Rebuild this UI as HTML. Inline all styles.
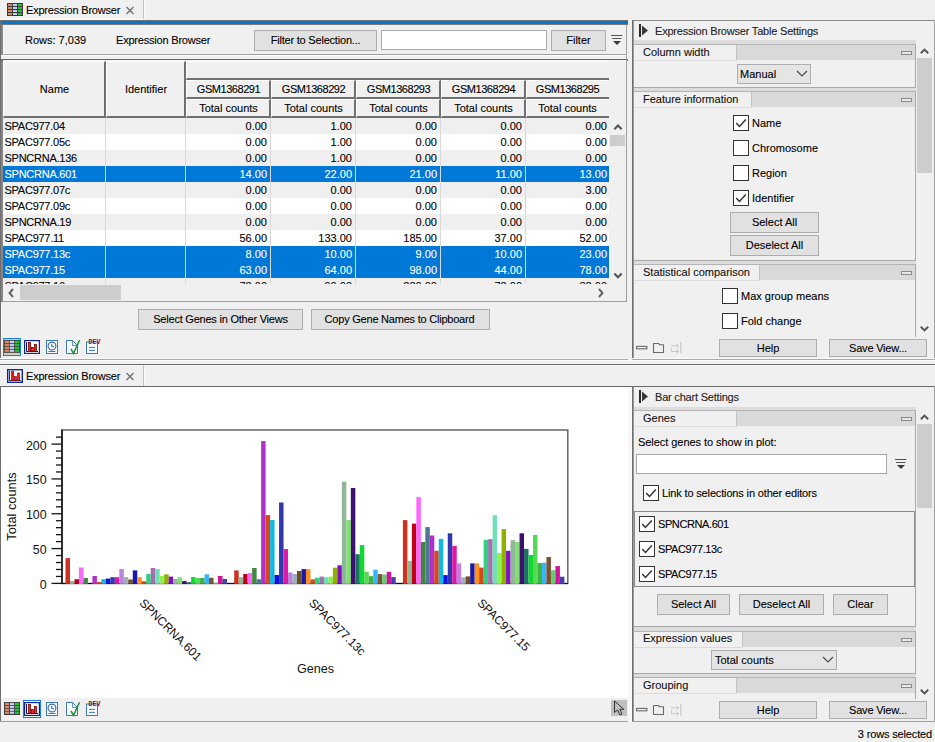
<!DOCTYPE html><html><head><meta charset="utf-8"><style>
*{margin:0;padding:0;box-sizing:border-box}
html,body{width:935px;height:742px;overflow:hidden;background:#f0f0f0;font-family:"Liberation Sans",sans-serif;font-size:11px;color:#000}
div{position:absolute}
.t{white-space:nowrap;font-size:11px;line-height:11px;-webkit-text-stroke:0.1px currentColor}
.btn{background:#e1e1e1;border:1px solid #adadad}
.chk{width:16px;height:16px;border:1px solid #333;background:#fff}
</style></head><body><div style="left:143px;top:0px;width:1px;height:19px;background:#c4c4c4"></div>
<div style="left:144px;top:0px;width:1px;height:19px;background:#fafafa"></div>
<div style="left:0px;top:19px;width:143px;height:1px;background:#fafafa"></div>
<svg width="17" height="14" style="position:absolute;left:7px;top:3px"><rect x="0" y="0" width="16" height="13" fill="#3a3a3a"/><rect x="1" y="1" width="4" height="2" fill="#dc8a64"/><rect x="6" y="1" width="4" height="2" fill="#c0d0f8"/><rect x="11" y="1" width="4" height="2" fill="#30c038"/><rect x="1" y="4" width="4" height="2" fill="#dc8a64"/><rect x="6" y="4" width="4" height="2" fill="#c0d0f8"/><rect x="11" y="4" width="4" height="2" fill="#30c038"/><rect x="1" y="7" width="4" height="2" fill="#dc8a64"/><rect x="6" y="7" width="4" height="2" fill="#c0d0f8"/><rect x="11" y="7" width="4" height="2" fill="#30c038"/><rect x="1" y="10" width="4" height="2" fill="#dc8a64"/><rect x="6" y="10" width="4" height="2" fill="#c0d0f8"/><rect x="11" y="10" width="4" height="2" fill="#30c038"/></svg>
<div class="t" style="left:26px;top:5px;font-size:11px;line-height:11px;color:#000;letter-spacing:-0.2px">Expression Browser</div>
<svg width="12" height="12" style="position:absolute;left:124px;top:4px"><path d="M2.5 3 L9.5 10 M9.5 3 L2.5 10" stroke="#707070" stroke-width="1.4"/></svg>
<div style="left:0px;top:20px;width:628px;height:1px;background:#707070"></div>
<div style="left:1px;top:21px;width:627px;height:3px;background:#0078d7"></div>
<div style="left:0px;top:24px;width:628px;height:1px;background:#7a7a7a"></div>
<div style="left:0px;top:20px;width:1px;height:339px;background:#6e6e6e"></div>
<div style="left:1px;top:25px;width:2px;height:277px;background:#868686"></div>
<div style="left:3px;top:25px;width:624px;height:30px;background:#f0f0f0;border-right:1px solid #a0a0a0;border-bottom:1px solid #a0a0a0;border-left:1px solid #fafafa"></div>
<div class="t" style="left:25px;top:35px;font-size:11px;line-height:11px;color:#000;">Rows: 7,039</div>
<div class="t" style="left:116px;top:35px;font-size:11px;line-height:11px;color:#000;letter-spacing:-0.2px">Expression Browser</div>
<div class="btn" style="left:254px;top:30px;width:123px;height:21px"></div>
<div class="t" style="left:254px;width:123px;text-align:center;top:35px;letter-spacing:-0.2px">Filter to Selection...</div>
<div style="left:381px;top:30px;width:166px;height:20px;background:#fff;border:1px solid #a8a8a8"></div>
<div class="btn" style="left:551px;top:30px;width:55px;height:21px"></div>
<div class="t" style="left:551px;width:55px;text-align:center;top:35px;">Filter</div>
<svg width="13" height="12" style="position:absolute;left:611px;top:34px"><path d="M0 1.5 H11.5 M1 4.5 H10.5" stroke="#555" stroke-width="1.2"/><path d="M2 7 H10 L6 11 Z" fill="#3a3a3a"/></svg>
<div style="left:1px;top:55px;width:627px;height:1px;background:#fcfcfc"></div>
<div style="left:1px;top:56px;width:627px;height:3px;background:#f0f0f0"></div>
<div style="left:1px;top:59px;width:627px;height:2px;background:#686868"></div>
<div style="left:3px;top:60px;width:624px;height:242px;background:#f0f0f0"></div>
<div style="left:3px;top:61px;width:103px;height:57px;background:#f0f0f0;border-top:1px solid #fff;border-left:1px solid #fff;border-right:2px solid #707070;border-bottom:2px solid #707070"></div>
<div class="t" style="left:3px;width:103px;text-align:center;top:84px;letter-spacing:0px">Name</div>
<div style="left:106px;top:61px;width:80px;height:57px;background:#f0f0f0;border-top:1px solid #fff;border-left:1px solid #fff;border-right:2px solid #707070;border-bottom:2px solid #707070"></div>
<div class="t" style="left:106px;width:80px;text-align:center;top:84px;letter-spacing:0px">Identifier</div>
<div style="left:186px;top:61px;width:423px;height:19px;background:#f0f0f0;border-top:1px solid #fff;border-left:1px solid #fff;border-bottom:2px solid #707070"></div>
<div style="left:186px;top:80px;width:85px;height:19px;background:#f0f0f0;border-top:1px solid #fff;border-left:1px solid #fff;border-right:2px solid #707070;border-bottom:2px solid #707070"></div>
<div class="t" style="left:186px;width:85px;text-align:center;top:84px;letter-spacing:-0.45px">GSM1368291</div>
<div style="left:186px;top:99px;width:85px;height:19px;background:#f0f0f0;border-top:1px solid #fff;border-left:1px solid #fff;border-right:2px solid #707070;border-bottom:2px solid #707070"></div>
<div class="t" style="left:186px;width:85px;text-align:center;top:103px;letter-spacing:0px">Total counts</div>
<div style="left:271px;top:80px;width:85px;height:19px;background:#f0f0f0;border-top:1px solid #fff;border-left:1px solid #fff;border-right:2px solid #707070;border-bottom:2px solid #707070"></div>
<div class="t" style="left:271px;width:85px;text-align:center;top:84px;letter-spacing:-0.45px">GSM1368292</div>
<div style="left:271px;top:99px;width:85px;height:19px;background:#f0f0f0;border-top:1px solid #fff;border-left:1px solid #fff;border-right:2px solid #707070;border-bottom:2px solid #707070"></div>
<div class="t" style="left:271px;width:85px;text-align:center;top:103px;letter-spacing:0px">Total counts</div>
<div style="left:356px;top:80px;width:85px;height:19px;background:#f0f0f0;border-top:1px solid #fff;border-left:1px solid #fff;border-right:2px solid #707070;border-bottom:2px solid #707070"></div>
<div class="t" style="left:356px;width:85px;text-align:center;top:84px;letter-spacing:-0.45px">GSM1368293</div>
<div style="left:356px;top:99px;width:85px;height:19px;background:#f0f0f0;border-top:1px solid #fff;border-left:1px solid #fff;border-right:2px solid #707070;border-bottom:2px solid #707070"></div>
<div class="t" style="left:356px;width:85px;text-align:center;top:103px;letter-spacing:0px">Total counts</div>
<div style="left:441px;top:80px;width:85px;height:19px;background:#f0f0f0;border-top:1px solid #fff;border-left:1px solid #fff;border-right:2px solid #707070;border-bottom:2px solid #707070"></div>
<div class="t" style="left:441px;width:85px;text-align:center;top:84px;letter-spacing:-0.45px">GSM1368294</div>
<div style="left:441px;top:99px;width:85px;height:19px;background:#f0f0f0;border-top:1px solid #fff;border-left:1px solid #fff;border-right:2px solid #707070;border-bottom:2px solid #707070"></div>
<div class="t" style="left:441px;width:85px;text-align:center;top:103px;letter-spacing:0px">Total counts</div>
<div style="left:526px;top:80px;width:83px;height:19px;background:#f0f0f0;border-top:1px solid #fff;border-left:1px solid #fff;border-bottom:2px solid #707070"></div>
<div class="t" style="left:526px;width:83px;text-align:center;top:84px;letter-spacing:-0.45px">GSM1368295</div>
<div style="left:526px;top:99px;width:83px;height:19px;background:#f0f0f0;border-top:1px solid #fff;border-left:1px solid #fff;border-bottom:2px solid #707070"></div>
<div class="t" style="left:526px;width:83px;text-align:center;top:103px;letter-spacing:0px">Total counts</div>
<div style="left:3px;top:118px;width:606px;height:166px;overflow:hidden">
<div style="left:0;top:0px;width:607px;height:16px;background:#efefef"></div>
<div class="t" style="left:1.5px;top:3px;color:#000;letter-spacing:-0.25px">SPAC977.04</div>
<div class="t" style="left:182px;width:82px;text-align:right;top:3px;color:#000">0.00</div>
<div class="t" style="left:267px;width:82px;text-align:right;top:3px;color:#000">1.00</div>
<div class="t" style="left:352px;width:82px;text-align:right;top:3px;color:#000">0.00</div>
<div class="t" style="left:437px;width:82px;text-align:right;top:3px;color:#000">0.00</div>
<div class="t" style="left:522px;width:82px;text-align:right;top:3px;color:#000">0.00</div>
<div style="left:0;top:16px;width:607px;height:16px;background:#ffffff"></div>
<div class="t" style="left:1.5px;top:19px;color:#000;letter-spacing:-0.25px">SPAC977.05c</div>
<div class="t" style="left:182px;width:82px;text-align:right;top:19px;color:#000">0.00</div>
<div class="t" style="left:267px;width:82px;text-align:right;top:19px;color:#000">1.00</div>
<div class="t" style="left:352px;width:82px;text-align:right;top:19px;color:#000">0.00</div>
<div class="t" style="left:437px;width:82px;text-align:right;top:19px;color:#000">0.00</div>
<div class="t" style="left:522px;width:82px;text-align:right;top:19px;color:#000">0.00</div>
<div style="left:0;top:32px;width:607px;height:16px;background:#efefef"></div>
<div class="t" style="left:1.5px;top:35px;color:#000;letter-spacing:-0.25px">SPNCRNA.136</div>
<div class="t" style="left:182px;width:82px;text-align:right;top:35px;color:#000">0.00</div>
<div class="t" style="left:267px;width:82px;text-align:right;top:35px;color:#000">1.00</div>
<div class="t" style="left:352px;width:82px;text-align:right;top:35px;color:#000">0.00</div>
<div class="t" style="left:437px;width:82px;text-align:right;top:35px;color:#000">0.00</div>
<div class="t" style="left:522px;width:82px;text-align:right;top:35px;color:#000">0.00</div>
<div style="left:0;top:48px;width:607px;height:16px;background:#0078d7"></div>
<div class="t" style="left:1.5px;top:51px;color:#fff;letter-spacing:-0.25px">SPNCRNA.601</div>
<div class="t" style="left:182px;width:82px;text-align:right;top:51px;color:#fff">14.00</div>
<div class="t" style="left:267px;width:82px;text-align:right;top:51px;color:#fff">22.00</div>
<div class="t" style="left:352px;width:82px;text-align:right;top:51px;color:#fff">21.00</div>
<div class="t" style="left:437px;width:82px;text-align:right;top:51px;color:#fff">11.00</div>
<div class="t" style="left:522px;width:82px;text-align:right;top:51px;color:#fff">13.00</div>
<div style="left:0;top:64px;width:607px;height:16px;background:#efefef"></div>
<div class="t" style="left:1.5px;top:67px;color:#000;letter-spacing:-0.25px">SPAC977.07c</div>
<div class="t" style="left:182px;width:82px;text-align:right;top:67px;color:#000">0.00</div>
<div class="t" style="left:267px;width:82px;text-align:right;top:67px;color:#000">0.00</div>
<div class="t" style="left:352px;width:82px;text-align:right;top:67px;color:#000">0.00</div>
<div class="t" style="left:437px;width:82px;text-align:right;top:67px;color:#000">0.00</div>
<div class="t" style="left:522px;width:82px;text-align:right;top:67px;color:#000">3.00</div>
<div style="left:0;top:80px;width:607px;height:16px;background:#ffffff"></div>
<div class="t" style="left:1.5px;top:83px;color:#000;letter-spacing:-0.25px">SPAC977.09c</div>
<div class="t" style="left:182px;width:82px;text-align:right;top:83px;color:#000">0.00</div>
<div class="t" style="left:267px;width:82px;text-align:right;top:83px;color:#000">0.00</div>
<div class="t" style="left:352px;width:82px;text-align:right;top:83px;color:#000">0.00</div>
<div class="t" style="left:437px;width:82px;text-align:right;top:83px;color:#000">0.00</div>
<div class="t" style="left:522px;width:82px;text-align:right;top:83px;color:#000">0.00</div>
<div style="left:0;top:96px;width:607px;height:16px;background:#efefef"></div>
<div class="t" style="left:1.5px;top:99px;color:#000;letter-spacing:-0.25px">SPNCRNA.19</div>
<div class="t" style="left:182px;width:82px;text-align:right;top:99px;color:#000">0.00</div>
<div class="t" style="left:267px;width:82px;text-align:right;top:99px;color:#000">0.00</div>
<div class="t" style="left:352px;width:82px;text-align:right;top:99px;color:#000">0.00</div>
<div class="t" style="left:437px;width:82px;text-align:right;top:99px;color:#000">0.00</div>
<div class="t" style="left:522px;width:82px;text-align:right;top:99px;color:#000">0.00</div>
<div style="left:0;top:112px;width:607px;height:16px;background:#ffffff"></div>
<div class="t" style="left:1.5px;top:115px;color:#000;letter-spacing:-0.25px">SPAC977.11</div>
<div class="t" style="left:182px;width:82px;text-align:right;top:115px;color:#000">56.00</div>
<div class="t" style="left:267px;width:82px;text-align:right;top:115px;color:#000">133.00</div>
<div class="t" style="left:352px;width:82px;text-align:right;top:115px;color:#000">185.00</div>
<div class="t" style="left:437px;width:82px;text-align:right;top:115px;color:#000">37.00</div>
<div class="t" style="left:522px;width:82px;text-align:right;top:115px;color:#000">52.00</div>
<div style="left:0;top:128px;width:607px;height:16px;background:#0078d7"></div>
<div class="t" style="left:1.5px;top:131px;color:#fff;letter-spacing:-0.25px">SPAC977.13c</div>
<div class="t" style="left:182px;width:82px;text-align:right;top:131px;color:#fff">8.00</div>
<div class="t" style="left:267px;width:82px;text-align:right;top:131px;color:#fff">10.00</div>
<div class="t" style="left:352px;width:82px;text-align:right;top:131px;color:#fff">9.00</div>
<div class="t" style="left:437px;width:82px;text-align:right;top:131px;color:#fff">10.00</div>
<div class="t" style="left:522px;width:82px;text-align:right;top:131px;color:#fff">23.00</div>
<div style="left:0;top:144px;width:607px;height:16px;background:#0078d7"></div>
<div class="t" style="left:1.5px;top:147px;color:#fff;letter-spacing:-0.25px">SPAC977.15</div>
<div class="t" style="left:182px;width:82px;text-align:right;top:147px;color:#fff">63.00</div>
<div class="t" style="left:267px;width:82px;text-align:right;top:147px;color:#fff">64.00</div>
<div class="t" style="left:352px;width:82px;text-align:right;top:147px;color:#fff">98.00</div>
<div class="t" style="left:437px;width:82px;text-align:right;top:147px;color:#fff">44.00</div>
<div class="t" style="left:522px;width:82px;text-align:right;top:147px;color:#fff">78.00</div>
<div style="left:0;top:160px;width:607px;height:16px;background:#efefef"></div>
<div class="t" style="left:1.5px;top:163px;color:#000;letter-spacing:-0.25px">SPAC977.16</div>
<div class="t" style="left:182px;width:82px;text-align:right;top:163px;color:#000">73.00</div>
<div class="t" style="left:267px;width:82px;text-align:right;top:163px;color:#000">90.00</div>
<div class="t" style="left:352px;width:82px;text-align:right;top:163px;color:#000">230.00</div>
<div class="t" style="left:437px;width:82px;text-align:right;top:163px;color:#000">73.00</div>
<div class="t" style="left:522px;width:82px;text-align:right;top:163px;color:#000">83.00</div>
<div style="left:102px;top:0;width:1px;height:166px;background:#d9d9d9"></div>
<div style="left:182px;top:0;width:1px;height:166px;background:#d9d9d9"></div>
<div style="left:267px;top:0;width:1px;height:166px;background:#d9d9d9"></div>
<div style="left:352px;top:0;width:1px;height:166px;background:#d9d9d9"></div>
<div style="left:437px;top:0;width:1px;height:166px;background:#d9d9d9"></div>
<div style="left:522px;top:0;width:1px;height:166px;background:#d9d9d9"></div>
</div>
<div style="left:610px;top:118px;width:16px;height:166px;background:#f0f0f0"></div>
<svg width="12" height="8" style="position:absolute;left:611.5px;top:123px"><path d="M2.3 6.2 L6 2.5 L9.7 6.2" fill="none" stroke="#555" stroke-width="2.1"/></svg>
<div style="left:610px;top:135px;width:15px;height:11px;background:#cdcdcd"></div>
<svg width="12" height="8" style="position:absolute;left:611.5px;top:272px"><path d="M2.3 1.5 L6 5.2 L9.7 1.5" fill="none" stroke="#555" stroke-width="2.1"/></svg>
<div style="left:3px;top:284px;width:624px;height:17px;background:#f0f0f0"></div>
<svg width="6" height="10" style="position:absolute;left:8px;top:288px"><path d="M5 1 L1.5 5 L5 9" fill="none" stroke="#606060" stroke-width="1.9"/></svg>
<div style="left:20px;top:285px;width:101px;height:15px;background:#cdcdcd"></div>
<svg width="6" height="10" style="position:absolute;left:598px;top:288px"><path d="M1 1 L4.5 5 L1 9" fill="none" stroke="#606060" stroke-width="1.9"/></svg>
<div style="left:3px;top:301px;width:624px;height:1px;background:#a0a0a0"></div>
<div style="left:626px;top:25px;width:1px;height:277px;background:#a0a0a0"></div>
<div class="btn" style="left:138px;top:309px;width:165px;height:21px"></div>
<div class="t" style="left:138px;width:165px;text-align:center;top:314px;letter-spacing:-0.22px">Select Genes in Other Views</div>
<div class="btn" style="left:311px;top:309px;width:179px;height:21px"></div>
<div class="t" style="left:311px;width:179px;text-align:center;top:314px;letter-spacing:-0.22px;text-indent:-2px">Copy Gene Names to Clipboard</div>
<svg width="110" height="20" style="position:absolute;left:0px;top:338px"><rect x="3.5" y="0.5" width="17" height="17" fill="none" stroke="#1a80e0" stroke-width="1.1"/><rect x="4" y="1" width="16" height="16" fill="#d4cac0"/><rect x="4" y="2" width="16" height="12.8" fill="#3a3a3a"/><rect x="4.70" y="2.80" width="4.4" height="2.2" fill="#dc8a64"/><rect x="9.75" y="2.80" width="4.4" height="2.2" fill="#c0d0f8"/><rect x="14.80" y="2.80" width="4.4" height="2.2" fill="#30c038"/><rect x="4.70" y="5.75" width="4.4" height="2.2" fill="#dc8a64"/><rect x="9.75" y="5.75" width="4.4" height="2.2" fill="#c0d0f8"/><rect x="14.80" y="5.75" width="4.4" height="2.2" fill="#30c038"/><rect x="4.70" y="8.70" width="4.4" height="2.2" fill="#dc8a64"/><rect x="9.75" y="8.70" width="4.4" height="2.2" fill="#c0d0f8"/><rect x="14.80" y="8.70" width="4.4" height="2.2" fill="#30c038"/><rect x="4.70" y="11.65" width="4.4" height="2.2" fill="#dc8a64"/><rect x="9.75" y="11.65" width="4.4" height="2.2" fill="#c0d0f8"/><rect x="14.80" y="11.65" width="4.4" height="2.2" fill="#30c038"/><rect x="24.6" y="2.6" width="14.8" height="12.8" fill="#fff" stroke="#0a2890" stroke-width="1.2"/><path d="M26.5 4 V13.5 H38" fill="none" stroke="#101050" stroke-width="1"/><rect x="28.5" y="4.5" width="2" height="9" fill="#f02828" stroke="#800000" stroke-width="0.8"/><rect x="31.5" y="9.5" width="1.8" height="4" fill="#f02828" stroke="#800000" stroke-width="0.8"/><rect x="34.5" y="6.5" width="2" height="7" fill="#f02828" stroke="#800000" stroke-width="0.8"/><rect x="46.5" y="2.5" width="11" height="13" fill="#f6f9fd" stroke="#3f78b8" stroke-width="1"/><circle cx="52" cy="8" r="3.9" fill="none" stroke="#3a6aa8" stroke-width="1.1"/><path d="M51.7 5.8 V8.6 H54" fill="none" stroke="#3a6aa8" stroke-width="1"/><path d="M48.5 13.5 H55.5" stroke="#3f78b8" stroke-width="1"/><path d="M66.5 2.5 H72.5 L77.5 7.5 V15.5 H66.5 Z" fill="#f6f9fd" stroke="#3f78b8" stroke-width="1"/><path d="M72.5 2.5 V7.5 H77.5" fill="none" stroke="#3f78b8" stroke-width="0.8"/><path d="M71 11 L73.5 15.3 L79.5 2.3" fill="none" stroke="#209040" stroke-width="1.5"/><rect x="86.5" y="4" width="11" height="11.5" fill="#f6f9fd" stroke="#3f78b8" stroke-width="1"/><path d="M89 9.4 H95 M89 12.4 H95" stroke="#3f78b8" stroke-width="1"/><text x="88.5" y="6" font-family="Liberation Mono" font-size="6.4" font-weight="bold" fill="#b00018" textLength="12" lengthAdjust="spacingAndGlyphs">DEV</text></svg>
<div style="left:0px;top:359px;width:628px;height:1px;background:#a8a8a8"></div>
<div style="left:632px;top:20px;width:303px;height:1px;background:#8a8a8a"></div>
<div style="left:632px;top:20px;width:1px;height:339px;background:#6e6e6e"></div>
<div style="left:633px;top:21px;width:1px;height:338px;background:#9a9a9a"></div>
<div style="left:934px;top:20px;width:1px;height:339px;background:#a0a0a0"></div>
<svg width="12" height="14" style="position:absolute;left:638px;top:24px"><rect x="1" y="0" width="2" height="13" fill="#2a2a2a"/><path d="M4 1.5 L10 6.5 L4 11.5 Z" fill="#3a3a3a"/></svg>
<div class="t" style="left:655px;top:26px;font-size:11px;line-height:11px;color:#222;letter-spacing:-0.2px">Expression Browser Table Settings</div>
<div style="left:634px;top:40px;width:282px;height:297px;background:#dcdcdc"></div>
<div style="left:634px;top:44px;width:282px;height:44px;background:#f0f0f0;border:1px solid #a8a8a8;border-left:none;border-top-color:#b4b4b4"></div>
<div style="left:634px;top:45px;width:281px;height:15px;background:#d9d9d9"></div>
<div style="left:634px;top:45px;width:103px;height:15px;background:#f0f0f0;border-right:1px solid #c4c4c4"></div>
<div style="left:634px;top:60px;width:103px;height:1px;background:#dcdcdc"></div>
<div class="t" style="left:643px;top:47px;font-size:11px;line-height:11px;color:#111;">Column width</div>
<div style="left:901px;top:51px;width:11px;height:4px;border:1px solid #8a8a8a;background:#e8e8e8"></div>
<div style="left:737px;top:64px;width:74px;height:20px;background:#e5e5e5;border:1px solid #adadad"></div>
<div class="t" style="left:740px;top:69px;font-size:11px;line-height:11px;color:#000;">Manual</div>
<svg width="12" height="8" style="position:absolute;left:796px;top:70px"><path d="M1 1 L6 6 L11 1" fill="none" stroke="#444" stroke-width="1.1"/></svg>
<div style="left:634px;top:91px;width:282px;height:170px;background:#f0f0f0;border:1px solid #a8a8a8;border-left:none;border-top-color:#b4b4b4"></div>
<div style="left:634px;top:92px;width:281px;height:15px;background:#d9d9d9"></div>
<div style="left:634px;top:92px;width:118px;height:15px;background:#f0f0f0;border-right:1px solid #c4c4c4"></div>
<div style="left:634px;top:107px;width:118px;height:1px;background:#dcdcdc"></div>
<div class="t" style="left:643px;top:94px;font-size:11px;line-height:11px;color:#111;">Feature information</div>
<div style="left:901px;top:98px;width:11px;height:4px;border:1px solid #8a8a8a;background:#e8e8e8"></div>
<div class="chk" style="left:733px;top:115px"><svg width="14" height="14" style="position:absolute;left:0;top:0"><path d="M2.2 7 L5.5 10.5 L11.8 3.6" fill="none" stroke="#333" stroke-width="1.5"/></svg></div>
<div class="t" style="left:752px;top:118px;font-size:11px;line-height:11px;color:#000;">Name</div>
<div class="chk" style="left:733px;top:140px"></div>
<div class="t" style="left:752px;top:143px;font-size:11px;line-height:11px;color:#000;">Chromosome</div>
<div class="chk" style="left:733px;top:165px"></div>
<div class="t" style="left:752px;top:168px;font-size:11px;line-height:11px;color:#000;">Region</div>
<div class="chk" style="left:733px;top:190px"><svg width="14" height="14" style="position:absolute;left:0;top:0"><path d="M2.2 7 L5.5 10.5 L11.8 3.6" fill="none" stroke="#333" stroke-width="1.5"/></svg></div>
<div class="t" style="left:752px;top:193px;font-size:11px;line-height:11px;color:#000;">Identifier</div>
<div class="btn" style="left:730px;top:212px;width:89px;height:21px"></div>
<div class="t" style="left:730px;width:89px;text-align:center;top:217px;">Select All</div>
<div class="btn" style="left:730px;top:235px;width:89px;height:21px"></div>
<div class="t" style="left:730px;width:89px;text-align:center;top:240px;">Deselect All</div>
<div style="left:634px;top:264px;width:282px;height:82px;background:#f0f0f0;border:1px solid #a8a8a8;border-left:none;border-top-color:#b4b4b4"></div>
<div style="left:634px;top:265px;width:281px;height:15px;background:#d9d9d9"></div>
<div style="left:634px;top:265px;width:126px;height:15px;background:#f0f0f0;border-right:1px solid #c4c4c4"></div>
<div style="left:634px;top:280px;width:126px;height:1px;background:#dcdcdc"></div>
<div class="t" style="left:643px;top:267px;font-size:11px;line-height:11px;color:#111;">Statistical comparison</div>
<div style="left:901px;top:271px;width:11px;height:4px;border:1px solid #8a8a8a;background:#e8e8e8"></div>
<div class="chk" style="left:722px;top:288px"></div>
<div class="t" style="left:741px;top:291px;font-size:11px;line-height:11px;color:#000;">Max group means</div>
<div class="chk" style="left:722px;top:313px"></div>
<div class="t" style="left:741px;top:316px;font-size:11px;line-height:11px;color:#000;">Fold change</div>
<div style="left:634px;top:337px;width:300px;height:22px;background:#f0f0f0"></div>
<div style="left:917px;top:44px;width:17px;height:293px;background:#f0f0f0"></div>
<svg width="12" height="8" style="position:absolute;left:918px;top:47px"><path d="M2.8 6.3 L6.5 2.6 L10.2 6.3" fill="none" stroke="#555" stroke-width="2"/></svg>
<div style="left:917px;top:58px;width:15px;height:115px;background:#cdcdcd"></div>
<svg width="12" height="8" style="position:absolute;left:918px;top:325px"><path d="M2.8 1.7 L6.5 5.4 L10.2 1.7" fill="none" stroke="#555" stroke-width="2"/></svg>
<svg width="60" height="18" style="position:absolute;left:632px;top:339px"><rect x="4.6" y="7.4" width="10.3" height="2.4" fill="none" stroke="#6a6a6a" stroke-width="1.1"/><path d="M21.5 13.5 V4.5 H26.5 L27.8 5.8 H31.5 V13.5 Z" fill="none" stroke="#6a6a6a" stroke-width="1.1" stroke-linejoin="round"/><path d="M48.8 3 V14.5" stroke="#c8c8c8" stroke-width="1.3"/><path d="M39 6.7 H46.5 M44.3 4.6 L46.6 6.7 L44.3 8.8" fill="none" stroke="#c8c8c8" stroke-width="1"/><path d="M39.5 9 V12.5 H46.5 M44.3 10.4 L46.6 12.5 L44.3 14.6" fill="none" stroke="#c8c8c8" stroke-width="1"/></svg>
<div class="btn" style="left:719px;top:339px;width:98px;height:18px"></div>
<div class="t" style="left:719px;width:98px;text-align:center;top:343px;">Help</div>
<div class="btn" style="left:829px;top:339px;width:98px;height:18px"></div>
<div class="t" style="left:829px;width:98px;text-align:center;top:343px;letter-spacing:-0.2px">Save View...</div>
<div style="left:632px;top:359px;width:303px;height:1px;background:#a8a8a8"></div>
<div style="left:0px;top:358px;width:628px;height:1px;background:#fafafa"></div>
<div style="left:632px;top:358px;width:303px;height:1px;background:#fafafa"></div>
<div style="left:0px;top:360px;width:935px;height:1px;background:#fcfcfc"></div>
<div style="left:0px;top:364px;width:935px;height:1px;background:#6a6a6a"></div>
<div style="left:0px;top:365px;width:935px;height:1px;background:#f8f8f8"></div>
<div style="left:143px;top:365px;width:1px;height:21px;background:#c4c4c4"></div>
<div style="left:144px;top:365px;width:1px;height:21px;background:#fafafa"></div>
<svg width="17" height="15" style="position:absolute;left:7px;top:369px"><rect x="0.7" y="0.7" width="14.6" height="12.6" fill="#fff" stroke="#0a2890" stroke-width="1.4"/><path d="M2.5 2 V11.5 H13.8" fill="none" stroke="#101050" stroke-width="0.9"/><rect x="4.2" y="2.2" width="2.6" height="9.3" fill="#e02020" stroke="#900000" stroke-width="0.5"/><rect x="7.3" y="7.5" width="2.4" height="4" fill="#e02020" stroke="#900000" stroke-width="0.5"/><rect x="10.3" y="4" width="2.5" height="7.5" fill="#e02020" stroke="#900000" stroke-width="0.5"/></svg>
<div class="t" style="left:26px;top:371px;font-size:11px;line-height:11px;color:#000;letter-spacing:-0.2px">Expression Browser</div>
<svg width="12" height="12" style="position:absolute;left:124px;top:370px"><path d="M2.5 3 L9.5 10 M9.5 3 L2.5 10" stroke="#707070" stroke-width="1.4"/></svg>
<div style="left:0px;top:386px;width:935px;height:1px;background:#6a6a6a"></div>
<div style="left:0px;top:387px;width:1px;height:334px;background:#6e6e6e"></div>
<div style="left:1px;top:387px;width:628px;height:311px;background:#fff"></div>
<div style="left:628px;top:387px;width:4px;height:334px;background:#f8f8f8"></div>
<svg width="935" height="742" style="position:absolute;left:0;top:0"><rect x="62" y="430" width="505.8" height="153.5" fill="none" stroke="#666" stroke-width="1.5"/><path d="M62 583.5 H568" stroke="#111" stroke-width="1.2"/><rect x="65.50" y="558.10" width="4.486" height="25.80" fill="#d03020"/><rect x="69.99" y="581.00" width="4.486" height="2.90" fill="#90b890"/><rect x="74.47" y="579.20" width="4.486" height="4.70" fill="#c00018"/><rect x="78.96" y="567.50" width="4.486" height="16.40" fill="#ff66ff"/><rect x="83.44" y="578.00" width="4.486" height="5.90" fill="#408840"/><rect x="92.42" y="576.00" width="4.486" height="7.90" fill="#b030c8"/><rect x="96.90" y="582.00" width="4.486" height="1.90" fill="#d84820"/><rect x="101.39" y="579.20" width="4.486" height="4.70" fill="#10b8e0"/><rect x="105.87" y="578.60" width="4.486" height="5.30" fill="#1010e0"/><rect x="110.36" y="577.20" width="4.486" height="6.70" fill="#3038b0"/><rect x="114.85" y="577.20" width="4.486" height="6.70" fill="#e018a8"/><rect x="119.33" y="569.00" width="4.486" height="14.90" fill="#c080e0"/><rect x="123.82" y="577.00" width="4.486" height="6.90" fill="#a0b0c0"/><rect x="128.30" y="579.50" width="4.486" height="4.40" fill="#705020"/><rect x="132.79" y="570.40" width="4.486" height="13.50" fill="#1818b0"/><rect x="137.28" y="577.20" width="4.486" height="6.70" fill="#ff9020"/><rect x="141.76" y="581.30" width="4.486" height="2.60" fill="#d04820"/><rect x="146.25" y="574.00" width="4.486" height="9.90" fill="#30d080"/><rect x="150.73" y="568.00" width="4.486" height="15.90" fill="#a070b0"/><rect x="155.22" y="569.00" width="4.486" height="14.90" fill="#70e0b8"/><rect x="159.71" y="576.00" width="4.486" height="7.90" fill="#90f050"/><rect x="164.19" y="574.30" width="4.486" height="9.60" fill="#90b000"/><rect x="168.68" y="576.60" width="4.486" height="7.30" fill="#8010c0"/><rect x="173.16" y="578.90" width="4.486" height="5.00" fill="#90b898"/><rect x="177.65" y="577.20" width="4.486" height="6.70" fill="#80e070"/><rect x="182.14" y="581.10" width="4.486" height="2.80" fill="#401070"/><rect x="186.62" y="582.20" width="4.486" height="1.70" fill="#207068"/><rect x="191.11" y="577.00" width="4.486" height="6.90" fill="#10d830"/><rect x="195.59" y="578.00" width="4.486" height="5.90" fill="#58d858"/><rect x="200.08" y="578.00" width="4.486" height="5.90" fill="#40b040"/><rect x="204.57" y="574.30" width="4.486" height="9.60" fill="#30b8f8"/><rect x="209.05" y="577.80" width="4.486" height="6.10" fill="#805030"/><rect x="213.54" y="582.80" width="4.486" height="1.10" fill="#60d070"/><rect x="218.02" y="576.00" width="4.486" height="7.90" fill="#d8109a"/><rect x="222.51" y="579.00" width="4.486" height="4.90" fill="#4040b0"/><rect x="234.20" y="570.40" width="4.486" height="13.50" fill="#d03020"/><rect x="238.69" y="577.20" width="4.486" height="6.70" fill="#90b890"/><rect x="243.17" y="574.00" width="4.486" height="9.90" fill="#c00018"/><rect x="247.66" y="573.00" width="4.486" height="10.90" fill="#ff66ff"/><rect x="252.14" y="568.00" width="4.486" height="15.90" fill="#408840"/><rect x="256.63" y="579.30" width="4.486" height="4.60" fill="#4a7890"/><rect x="261.12" y="441.10" width="4.486" height="142.80" fill="#b030c8"/><rect x="265.60" y="515.10" width="4.486" height="68.80" fill="#d84820"/><rect x="270.09" y="520.00" width="4.486" height="63.90" fill="#10b8e0"/><rect x="274.57" y="575.00" width="4.486" height="8.90" fill="#1010e0"/><rect x="279.06" y="502.50" width="4.486" height="81.40" fill="#3038b0"/><rect x="283.55" y="549.10" width="4.486" height="34.80" fill="#e018a8"/><rect x="288.03" y="572.50" width="4.486" height="11.40" fill="#c080e0"/><rect x="292.52" y="574.00" width="4.486" height="9.90" fill="#a0b0c0"/><rect x="297.00" y="571.00" width="4.486" height="12.90" fill="#705020"/><rect x="301.49" y="569.10" width="4.486" height="14.80" fill="#1818b0"/><rect x="305.98" y="569.10" width="4.486" height="14.80" fill="#ff9020"/><rect x="310.46" y="579.40" width="4.486" height="4.50" fill="#d04820"/><rect x="314.95" y="577.80" width="4.486" height="6.10" fill="#30d080"/><rect x="319.43" y="576.60" width="4.486" height="7.30" fill="#a070b0"/><rect x="323.92" y="577.20" width="4.486" height="6.70" fill="#70e0b8"/><rect x="328.41" y="576.60" width="4.486" height="7.30" fill="#90f050"/><rect x="332.89" y="567.70" width="4.486" height="16.20" fill="#90b000"/><rect x="337.38" y="565.30" width="4.486" height="18.60" fill="#8010c0"/><rect x="341.86" y="481.70" width="4.486" height="102.20" fill="#90b898"/><rect x="346.35" y="520.00" width="4.486" height="63.90" fill="#80e070"/><rect x="350.84" y="488.00" width="4.486" height="95.90" fill="#401070"/><rect x="355.32" y="554.20" width="4.486" height="29.70" fill="#207068"/><rect x="359.81" y="545.10" width="4.486" height="38.80" fill="#10d830"/><rect x="364.29" y="571.80" width="4.486" height="12.10" fill="#58d858"/><rect x="368.78" y="576.20" width="4.486" height="7.70" fill="#40b040"/><rect x="373.27" y="569.70" width="4.486" height="14.20" fill="#30b8f8"/><rect x="377.75" y="574.10" width="4.486" height="9.80" fill="#805030"/><rect x="382.24" y="574.50" width="4.486" height="9.40" fill="#60d070"/><rect x="386.72" y="571.80" width="4.486" height="12.10" fill="#d8109a"/><rect x="391.21" y="577.10" width="4.486" height="6.80" fill="#4040b0"/><rect x="402.90" y="520.10" width="4.486" height="63.80" fill="#d03020"/><rect x="407.39" y="560.90" width="4.486" height="23.00" fill="#90b890"/><rect x="411.87" y="523.60" width="4.486" height="60.30" fill="#c00018"/><rect x="416.36" y="497.10" width="4.486" height="86.80" fill="#ff66ff"/><rect x="420.84" y="542.00" width="4.486" height="41.90" fill="#408840"/><rect x="425.33" y="527.10" width="4.486" height="56.80" fill="#4a7890"/><rect x="429.82" y="535.50" width="4.486" height="48.40" fill="#b030c8"/><rect x="434.30" y="550.80" width="4.486" height="33.10" fill="#d84820"/><rect x="438.79" y="538.90" width="4.486" height="45.00" fill="#10b8e0"/><rect x="443.27" y="575.10" width="4.486" height="8.80" fill="#1010e0"/><rect x="447.76" y="533.30" width="4.486" height="50.60" fill="#3038b0"/><rect x="452.25" y="545.90" width="4.486" height="38.00" fill="#e018a8"/><rect x="456.73" y="563.40" width="4.486" height="20.50" fill="#c080e0"/><rect x="461.22" y="577.30" width="4.486" height="6.60" fill="#a0b0c0"/><rect x="465.70" y="576.40" width="4.486" height="7.50" fill="#705020"/><rect x="470.19" y="563.40" width="4.486" height="20.50" fill="#1818b0"/><rect x="474.68" y="563.40" width="4.486" height="20.50" fill="#ff9020"/><rect x="479.16" y="567.60" width="4.486" height="16.30" fill="#d04820"/><rect x="483.65" y="539.80" width="4.486" height="44.10" fill="#30d080"/><rect x="488.13" y="539.20" width="4.486" height="44.70" fill="#a070b0"/><rect x="492.62" y="515.20" width="4.486" height="68.70" fill="#70e0b8"/><rect x="497.11" y="553.00" width="4.486" height="30.90" fill="#90f050"/><rect x="501.59" y="529.10" width="4.486" height="54.80" fill="#90b000"/><rect x="506.08" y="550.80" width="4.486" height="33.10" fill="#8010c0"/><rect x="510.56" y="540.20" width="4.486" height="43.70" fill="#90b898"/><rect x="515.05" y="542.00" width="4.486" height="41.90" fill="#80e070"/><rect x="519.54" y="533.30" width="4.486" height="50.60" fill="#401070"/><rect x="524.02" y="548.90" width="4.486" height="35.00" fill="#207068"/><rect x="528.51" y="554.90" width="4.486" height="29.00" fill="#10d830"/><rect x="532.99" y="534.90" width="4.486" height="49.00" fill="#58d858"/><rect x="537.48" y="563.10" width="4.486" height="20.80" fill="#40b040"/><rect x="541.97" y="562.70" width="4.486" height="21.20" fill="#30b8f8"/><rect x="546.45" y="557.00" width="4.486" height="26.90" fill="#805030"/><rect x="550.94" y="570.20" width="4.486" height="13.70" fill="#60d070"/><rect x="555.42" y="566.10" width="4.486" height="17.80" fill="#d8109a"/><rect x="559.91" y="576.70" width="4.486" height="7.20" fill="#4040b0"/><path d="M62 429.5 V584" stroke="#111" stroke-width="1.5"/><path d="M51.5 583.40 H62" stroke="#151515" stroke-width="1.3"/><text x="46.6" y="588.80" text-anchor="end" font-family="Liberation Sans" font-size="12.4" fill="#111">0</text><path d="M56 576.44 H62" stroke="#151515" stroke-width="1.3"/><path d="M56 569.47 H62" stroke="#151515" stroke-width="1.3"/><path d="M56 562.51 H62" stroke="#151515" stroke-width="1.3"/><path d="M56 555.54 H62" stroke="#151515" stroke-width="1.3"/><path d="M51.5 548.58 H62" stroke="#151515" stroke-width="1.3"/><text x="46.6" y="553.98" text-anchor="end" font-family="Liberation Sans" font-size="12.4" fill="#111">50</text><path d="M56 541.61 H62" stroke="#151515" stroke-width="1.3"/><path d="M56 534.65 H62" stroke="#151515" stroke-width="1.3"/><path d="M56 527.68 H62" stroke="#151515" stroke-width="1.3"/><path d="M56 520.72 H62" stroke="#151515" stroke-width="1.3"/><path d="M51.5 513.75 H62" stroke="#151515" stroke-width="1.3"/><text x="46.6" y="519.15" text-anchor="end" font-family="Liberation Sans" font-size="12.4" fill="#111">100</text><path d="M56 506.79 H62" stroke="#151515" stroke-width="1.3"/><path d="M56 499.82 H62" stroke="#151515" stroke-width="1.3"/><path d="M56 492.86 H62" stroke="#151515" stroke-width="1.3"/><path d="M56 485.89 H62" stroke="#151515" stroke-width="1.3"/><path d="M51.5 478.93 H62" stroke="#151515" stroke-width="1.3"/><text x="46.6" y="484.33" text-anchor="end" font-family="Liberation Sans" font-size="12.4" fill="#111">150</text><path d="M56 471.96 H62" stroke="#151515" stroke-width="1.3"/><path d="M56 465.00 H62" stroke="#151515" stroke-width="1.3"/><path d="M56 458.03 H62" stroke="#151515" stroke-width="1.3"/><path d="M56 451.07 H62" stroke="#151515" stroke-width="1.3"/><path d="M51.5 444.10 H62" stroke="#151515" stroke-width="1.3"/><text x="46.6" y="449.50" text-anchor="end" font-family="Liberation Sans" font-size="12.4" fill="#111">200</text><path d="M56 437.14 H62" stroke="#151515" stroke-width="1.3"/><text transform="translate(16.2,506.5) rotate(-90)" text-anchor="middle" font-family="Liberation Sans" font-size="12.8" fill="#111">Total counts</text><text x="315.5" y="673.2" text-anchor="middle" font-family="Liberation Sans" font-size="12.6" fill="#111">Genes</text><text transform="translate(145,597.3) rotate(45)" x="0" y="9" font-family="Liberation Sans" font-size="12" fill="#111">SPNCRNA.601</text><text transform="translate(314.5,597.3) rotate(45)" x="0" y="9" font-family="Liberation Sans" font-size="12" fill="#111">SPAC977.13c</text><text transform="translate(483,597.3) rotate(45)" x="0" y="9" font-family="Liberation Sans" font-size="12" fill="#111">SPAC977.15</text></svg>
<svg width="110" height="20" style="position:absolute;left:0px;top:700px"><rect x="4" y="2" width="16" height="13" fill="#3a3a3a"/><rect x="4.90" y="2.80" width="4.2" height="2.2" fill="#dc8a64"/><rect x="9.95" y="2.80" width="4.2" height="2.2" fill="#c0d0f8"/><rect x="15.00" y="2.80" width="4.2" height="2.2" fill="#30c038"/><rect x="4.90" y="5.75" width="4.2" height="2.2" fill="#dc8a64"/><rect x="9.95" y="5.75" width="4.2" height="2.2" fill="#c0d0f8"/><rect x="15.00" y="5.75" width="4.2" height="2.2" fill="#30c038"/><rect x="4.90" y="8.70" width="4.2" height="2.2" fill="#dc8a64"/><rect x="9.95" y="8.70" width="4.2" height="2.2" fill="#c0d0f8"/><rect x="15.00" y="8.70" width="4.2" height="2.2" fill="#30c038"/><rect x="4.90" y="11.65" width="4.2" height="2.2" fill="#dc8a64"/><rect x="9.95" y="11.65" width="4.2" height="2.2" fill="#c0d0f8"/><rect x="15.00" y="11.65" width="4.2" height="2.2" fill="#30c038"/><rect x="23.5" y="0.5" width="17" height="17" fill="none" stroke="#1a80e0" stroke-width="1.1"/><rect x="24" y="1" width="16" height="16" fill="#fff"/><rect x="24.6" y="2.6" width="14.8" height="12.8" fill="#fff" stroke="#0a2890" stroke-width="1.2"/><path d="M26.5 4 V13.5 H38" fill="none" stroke="#101050" stroke-width="1"/><rect x="28.5" y="4.5" width="2" height="9" fill="#f02828" stroke="#800000" stroke-width="0.8"/><rect x="31.5" y="9.5" width="1.8" height="4" fill="#f02828" stroke="#800000" stroke-width="0.8"/><rect x="34.5" y="6.5" width="2" height="7" fill="#f02828" stroke="#800000" stroke-width="0.8"/><rect x="46.5" y="2.5" width="11" height="13" fill="#f6f9fd" stroke="#3f78b8" stroke-width="1"/><circle cx="52" cy="8" r="3.9" fill="none" stroke="#3a6aa8" stroke-width="1.1"/><path d="M51.7 5.8 V8.6 H54" fill="none" stroke="#3a6aa8" stroke-width="1"/><path d="M48.5 13.5 H55.5" stroke="#3f78b8" stroke-width="1"/><path d="M66.5 2.5 H72.5 L77.5 7.5 V15.5 H66.5 Z" fill="#f6f9fd" stroke="#3f78b8" stroke-width="1"/><path d="M72.5 2.5 V7.5 H77.5" fill="none" stroke="#3f78b8" stroke-width="0.8"/><path d="M71 11 L73.5 15.3 L79.5 2.3" fill="none" stroke="#209040" stroke-width="1.5"/><rect x="86.5" y="4" width="11" height="11.5" fill="#f6f9fd" stroke="#3f78b8" stroke-width="1"/><path d="M89 9.4 H95 M89 12.4 H95" stroke="#3f78b8" stroke-width="1"/><text x="88.5" y="6" font-family="Liberation Mono" font-size="6.4" font-weight="bold" fill="#b00018" textLength="12" lengthAdjust="spacingAndGlyphs">DEV</text></svg>
<div style="left:611px;top:700px;width:16px;height:16px;background:#c0c0c0"></div>
<svg width="14" height="16" style="position:absolute;left:613px;top:700px"><path d="M1.5 1 V12.5 L4.5 10 L7 15 L9 14 L6.8 9.3 L10.8 9.3 Z" fill="none" stroke="#333" stroke-width="1"/></svg>
<div style="left:0px;top:721px;width:628px;height:1px;background:#a0a0a0"></div>
<div style="left:632px;top:386px;width:303px;height:1px;background:#6a6a6a"></div>
<div style="left:632px;top:386px;width:1px;height:335px;background:#6e6e6e"></div>
<div style="left:633px;top:387px;width:1px;height:334px;background:#9a9a9a"></div>
<div style="left:934px;top:386px;width:1px;height:335px;background:#a0a0a0"></div>
<svg width="12" height="14" style="position:absolute;left:638px;top:390px"><rect x="1" y="0" width="2" height="13" fill="#2a2a2a"/><path d="M4 1.5 L10 6.5 L4 11.5 Z" fill="#3a3a3a"/></svg>
<div class="t" style="left:655px;top:392px;font-size:11px;line-height:11px;color:#222;letter-spacing:-0.2px">Bar chart Settings</div>
<div style="left:634px;top:407px;width:282px;height:292px;background:#dcdcdc"></div>
<div style="left:634px;top:410px;width:282px;height:217px;background:#f0f0f0;border:1px solid #a8a8a8;border-left:none;border-top-color:#b4b4b4"></div>
<div style="left:634px;top:411px;width:281px;height:15px;background:#d9d9d9"></div>
<div style="left:634px;top:411px;width:103px;height:15px;background:#f0f0f0;border-right:1px solid #c4c4c4"></div>
<div style="left:634px;top:426px;width:103px;height:1px;background:#dcdcdc"></div>
<div class="t" style="left:643px;top:413px;font-size:11px;line-height:11px;color:#111;">Genes</div>
<div style="left:901px;top:417px;width:11px;height:4px;border:1px solid #8a8a8a;background:#e8e8e8"></div>
<div class="t" style="left:638px;top:437px;font-size:11px;line-height:11px;color:#000;letter-spacing:-0.05px">Select genes to show in plot:</div>
<div style="left:636px;top:454px;width:251px;height:20px;background:#fff;border:1px solid #a8a8a8"></div>
<svg width="13" height="12" style="position:absolute;left:895px;top:458px"><path d="M0 1.5 H11.5 M1 4.5 H10.5" stroke="#555" stroke-width="1.2"/><path d="M2 7 H10 L6 11 Z" fill="#3a3a3a"/></svg>
<div class="chk" style="left:643px;top:485px"><svg width="14" height="14" style="position:absolute;left:0;top:0"><path d="M2.2 7 L5.5 10.5 L11.8 3.6" fill="none" stroke="#333" stroke-width="1.5"/></svg></div>
<div class="t" style="left:662px;top:488px;font-size:11px;line-height:11px;color:#000;letter-spacing:-0.15px">Link to selections in other editors</div>
<div style="left:634px;top:511px;width:281px;height:76px;background:#f0f0f0;border:1px solid #8a8a8a"></div>
<div class="chk" style="left:639px;top:516px"><svg width="14" height="14" style="position:absolute;left:0;top:0"><path d="M2.2 7 L5.5 10.5 L11.8 3.6" fill="none" stroke="#333" stroke-width="1.5"/></svg></div>
<div class="t" style="left:658px;top:519px;font-size:11px;line-height:11px;color:#000;letter-spacing:-0.4px">SPNCRNA.601</div>
<div class="chk" style="left:639px;top:541px"><svg width="14" height="14" style="position:absolute;left:0;top:0"><path d="M2.2 7 L5.5 10.5 L11.8 3.6" fill="none" stroke="#333" stroke-width="1.5"/></svg></div>
<div class="t" style="left:658px;top:544px;font-size:11px;line-height:11px;color:#000;letter-spacing:-0.4px">SPAC977.13c</div>
<div class="chk" style="left:639px;top:566px"><svg width="14" height="14" style="position:absolute;left:0;top:0"><path d="M2.2 7 L5.5 10.5 L11.8 3.6" fill="none" stroke="#333" stroke-width="1.5"/></svg></div>
<div class="t" style="left:658px;top:569px;font-size:11px;line-height:11px;color:#000;letter-spacing:-0.4px">SPAC977.15</div>
<div class="btn" style="left:657px;top:594px;width:73px;height:21px"></div>
<div class="t" style="left:657px;width:73px;text-align:center;top:599px;">Select All</div>
<div class="btn" style="left:739px;top:594px;width:85px;height:21px"></div>
<div class="t" style="left:739px;width:85px;text-align:center;top:599px;">Deselect All</div>
<div class="btn" style="left:833px;top:594px;width:55px;height:21px"></div>
<div class="t" style="left:833px;width:55px;text-align:center;top:599px;">Clear</div>
<div style="left:634px;top:631px;width:282px;height:43px;background:#f0f0f0;border:1px solid #a8a8a8;border-left:none;border-top-color:#b4b4b4"></div>
<div style="left:634px;top:632px;width:281px;height:15px;background:#d9d9d9"></div>
<div style="left:634px;top:632px;width:109px;height:15px;background:#f0f0f0;border-right:1px solid #c4c4c4"></div>
<div style="left:634px;top:647px;width:109px;height:1px;background:#dcdcdc"></div>
<div class="t" style="left:643px;top:633px;font-size:11px;line-height:11px;color:#111;">Expression values</div>
<div style="left:901px;top:638px;width:11px;height:4px;border:1px solid #8a8a8a;background:#e8e8e8"></div>
<div style="left:711px;top:650px;width:126px;height:20px;background:#e5e5e5;border:1px solid #adadad"></div>
<div class="t" style="left:715px;top:655px;font-size:11px;line-height:11px;color:#000;">Total counts</div>
<svg width="12" height="8" style="position:absolute;left:822px;top:656px"><path d="M1 1 L6 6 L11 1" fill="none" stroke="#444" stroke-width="1.1"/></svg>
<div style="left:634px;top:677px;width:282px;height:34px;background:#f0f0f0;border:1px solid #a8a8a8;border-left:none;border-top-color:#b4b4b4"></div>
<div style="left:634px;top:678px;width:281px;height:15px;background:#d9d9d9"></div>
<div style="left:634px;top:678px;width:103px;height:15px;background:#f0f0f0;border-right:1px solid #c4c4c4"></div>
<div style="left:634px;top:693px;width:103px;height:1px;background:#dcdcdc"></div>
<div class="t" style="left:643px;top:680px;font-size:11px;line-height:11px;color:#111;">Grouping</div>
<div style="left:901px;top:684px;width:11px;height:4px;border:1px solid #8a8a8a;background:#e8e8e8"></div>
<div style="left:634px;top:699px;width:300px;height:22px;background:#f0f0f0"></div>
<div style="left:917px;top:410px;width:17px;height:289px;background:#f0f0f0"></div>
<svg width="12" height="8" style="position:absolute;left:918px;top:413px"><path d="M2.8 6.3 L6.5 2.6 L10.2 6.3" fill="none" stroke="#555" stroke-width="2"/></svg>
<div style="left:917px;top:424px;width:15px;height:84px;background:#cdcdcd"></div>
<svg width="12" height="8" style="position:absolute;left:918px;top:688px"><path d="M2.8 1.7 L6.5 5.4 L10.2 1.7" fill="none" stroke="#555" stroke-width="2"/></svg>
<svg width="60" height="18" style="position:absolute;left:632px;top:701px"><rect x="4.6" y="7.4" width="10.3" height="2.4" fill="none" stroke="#6a6a6a" stroke-width="1.1"/><path d="M21.5 13.5 V4.5 H26.5 L27.8 5.8 H31.5 V13.5 Z" fill="none" stroke="#6a6a6a" stroke-width="1.1" stroke-linejoin="round"/><path d="M48.8 3 V14.5" stroke="#c8c8c8" stroke-width="1.3"/><path d="M39 6.7 H46.5 M44.3 4.6 L46.6 6.7 L44.3 8.8" fill="none" stroke="#c8c8c8" stroke-width="1"/><path d="M39.5 9 V12.5 H46.5 M44.3 10.4 L46.6 12.5 L44.3 14.6" fill="none" stroke="#c8c8c8" stroke-width="1"/></svg>
<div class="btn" style="left:719px;top:701px;width:98px;height:18px"></div>
<div class="t" style="left:719px;width:98px;text-align:center;top:705px;">Help</div>
<div class="btn" style="left:829px;top:701px;width:98px;height:18px"></div>
<div class="t" style="left:829px;width:98px;text-align:center;top:705px;letter-spacing:-0.2px">Save View...</div>
<div style="left:632px;top:721px;width:303px;height:1px;background:#a0a0a0"></div>
<div class="t" style="left:700px;width:232px;text-align:right;top:729px;letter-spacing:-0.15px">3 rows selected</div></body></html>
